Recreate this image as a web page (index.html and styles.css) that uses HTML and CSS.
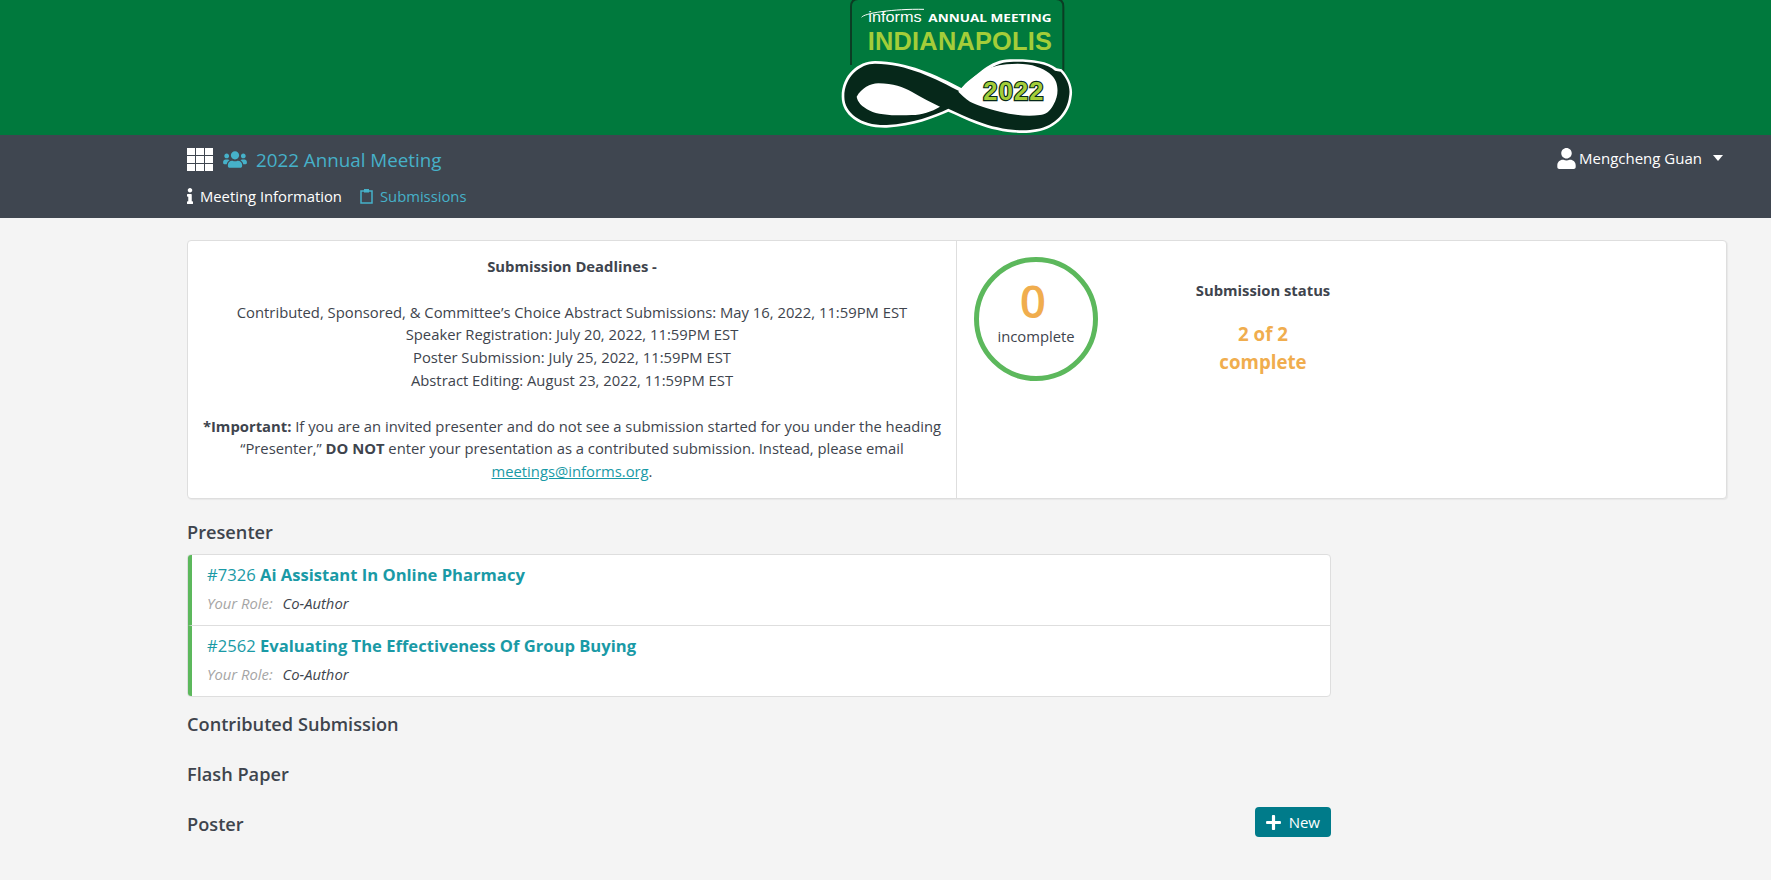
FILE: index.html
```html
<!DOCTYPE html>
<html lang="en">
<head>
    <meta charset="UTF-8">
    <title>2022 Annual Meeting</title>
    <link rel="stylesheet" href="styles.css">
</head>
<body>
    <!-- banner -->
    <header class="banner">
        <svg class="logo" viewBox="0 0 840 405" width="280" height="135">
            <path d="M93 195V20Q93 -3 115 -3H708Q730 -3 730 20V215" fill="none" stroke="#0b3d24" stroke-width="6"/>
            <text class="logo-informs" x="145" y="67" textLength="160" lengthAdjust="spacingAndGlyphs">informs</text>
            <path d="M125 52C130 40 220 26 312 28" fill="none" stroke="#fff" stroke-width="3"/>
            <text class="logo-annual" x="325" y="67" textLength="370" lengthAdjust="spacingAndGlyphs">ANNUAL MEETING</text>
            <text class="logo-city" x="143" y="150" textLength="553" lengthAdjust="spacing">INDIANAPOLIS</text>
            <path fill="#fff" d="M65 290C65 225 115 183 165 183C260 183 350 225 425 265C470 225 510 178 570 178C620 176 680 180 710 205L725 208C750 235 760 265 755 290C750 340 710 385 650 395C600 405 530 395 470 372C440 360 410 345 385 335C340 355 280 378 200 383C120 385 65 345 65 290Z"/>
            <path fill="#06281a" d="M73 290C73 230 120 191 165 191C260 191 345 235 425 277C470 240 515 186 570 186C620 184 680 188 705 212L722 215C745 240 752 265 747 290C742 335 705 378 650 387C600 397 530 387 472 364C440 352 410 337 385 326C340 347 280 370 200 375C125 377 73 340 73 290Z"/>
            <path fill="#fff" d="M110 290C125 265 150 250 175 250C220 250 250 262 275 275C305 292 335 308 360 320C335 335 305 345 275 345C230 348 175 345 150 332C125 320 112 305 110 290Z"/>
            <path fill="#fff" d="M415 275C435 250 450 238 470 225C500 205 530 195 560 193C590 190 625 190 650 200C680 210 700 225 708 245C715 265 715 290 700 315C690 335 675 345 660 345C620 350 580 345 540 335C500 325 470 315 450 305C435 295 425 285 415 275Z"/>
            <text class="logo-year" x="490" y="299" textLength="180" lengthAdjust="spacing">2022</text>
        </svg>
    </header>

    <!-- meeting nav -->
    <nav class="topnav">
        <div class="topnav-left">
            <div class="meeting-row">
                <span class="grid-icon"><i></i><i></i><i></i><i></i><i></i><i></i><i></i><i></i><i></i></span>
                <svg class="users-icon" viewBox="0 0 640 512"><path d="M96 224c35.3 0 64-28.7 64-64s-28.7-64-64-64-64 28.7-64 64 28.7 64 64 64zm448 0c35.3 0 64-28.7 64-64s-28.7-64-64-64-64 28.7-64 64 28.7 64 64 64zm32 32h-64c-17.6 0-33.5 7.1-45.1 18.6 40.3 22.1 68.9 62 75.1 109.4h66c17.7 0 32-14.3 32-32v-32c0-35.3-28.7-64-64-64zm-256 0c61.9 0 112-50.1 112-112S381.9 32 320 32 208 82.1 208 144s50.1 112 112 112zm76.8 32h-8.3c-20.8 10-43.9 16-68.5 16s-47.6-6-68.5-16h-8.3C179.6 288 128 339.6 128 403.2V432c0 26.5 21.5 48 48 48h288c26.5 0 48-21.5 48-48v-28.8c0-63.6-51.6-115.2-115.2-115.2zm-223.7-13.4C161.5 263.1 145.6 256 128 256H64c-35.3 0-64 28.7-64 64v32c0 17.7 14.3 32 32 32h65.9c6.3-47.4 34.9-87.3 75.2-109.4z"/></svg>
                <a class="meeting-title">2022 Annual Meeting</a>
            </div>
            <div class="tabs">
                <a class="tab active">
                    <svg class="info-icon" viewBox="0 0 192 512"><path d="M20 424.229h20V279.771H20c-11.046 0-20-8.954-20-20V212c0-11.046 8.954-20 20-20h112c11.046 0 20 8.954 20 20v212.229h20c11.046 0 20 8.954 20 20V492c0 11.046-8.954 20-20 20H20c-11.046 0-20-8.954-20-20v-47.771c0-11.046 8.954-20 20-20zM96 0C56.235 0 24 32.235 24 72s32.235 72 72 72 72-32.235 72-72S135.764 0 96 0z"/></svg>
                    Meeting Information
                </a>
                <a class="tab">
                    <svg class="clip-icon" viewBox="0 0 13 16"><path d="M4 3H1v12h11V3H9" fill="none" stroke="currentColor" stroke-width="1.5"/><rect x="4" y="1" width="5" height="3.5" fill="currentColor"/></svg>
                    Submissions
                </a>
            </div>
        </div>
        <div class="user-menu">
            <svg class="user-icon" viewBox="0 0 448 512"><path d="M224 256c70.7 0 128-57.3 128-128S294.7 0 224 0 96 57.3 96 128s57.3 128 128 128zm89.6 32h-16.7c-22.2 10.2-46.9 16-72.9 16s-50.6-5.8-72.9-16h-16.7C60.2 288 0 348.2 0 422.4V464c0 26.5 21.5 48 48 48h352c26.5 0 48-21.5 48-48v-41.6c0-74.2-60.2-134.4-134.4-134.4z"/></svg>
            <span>Mengcheng Guan</span>
            <span class="caret"></span>
        </div>
    </nav>

    <main class="content">
        <!-- deadlines + status -->
        <section class="summary-card">
            <div class="deadlines">
                <p><strong>Submission Deadlines -</strong></p>
                <p>
                    Contributed, Sponsored, &amp; Committee’s Choice Abstract Submissions: May 16, 2022, 11:59PM EST<br>
                    Speaker Registration: July 20, 2022, 11:59PM EST<br>
                    Poster Submission: July 25, 2022, 11:59PM EST<br>
                    Abstract Editing: August 23, 2022, 11:59PM EST
                </p>
                <p class="last">
                    <strong>*Important:</strong> If you are an invited presenter and do not see a submission started for you under the heading “Presenter,” <strong>DO NOT</strong> enter your presentation as a contributed submission. Instead, please email <a class="mail-link">meetings@informs.org</a>.
                </p>
            </div>
            <div class="status">
                <div class="ring">
                    <span class="ring-num">0</span>
                    <span class="ring-label">incomplete</span>
                </div>
                <div class="status-text">
                    <div class="status-head">Submission status</div>
                    <div class="status-count">2 of 2<br>complete</div>
                </div>
            </div>
        </section>

        <!-- submission lists -->
        <section class="lists">
            <h2 class="list-title">Presenter</h2>
            <div class="sub-list">
                <div class="sub-item">
                    <a class="sub-name">#7326 <b>Ai Assistant In Online Pharmacy</b></a>
                    <div class="sub-role"><span class="role-label">Your Role:</span> Co-Author</div>
                </div>
                <div class="sub-item">
                    <a class="sub-name">#2562 <b>Evaluating The Effectiveness Of Group Buying</b></a>
                    <div class="sub-role"><span class="role-label">Your Role:</span> Co-Author</div>
                </div>
            </div>
            <h2 class="list-title contributed">Contributed Submission</h2>
            <h2 class="list-title flash">Flash Paper</h2>
            <div class="poster-row">
                <h2 class="list-title">Poster</h2>
                <button class="btn-new">
                    <svg class="plus-icon" viewBox="0 0 448 512"><path d="M416 208H272V64c0-17.67-14.33-32-32-32h-32c-17.67 0-32 14.33-32 32v144H32c-17.67 0-32 14.33-32 32v32c0 17.67 14.33 32 32 32h144v144c0 17.67 14.33 32 32 32h32c17.67 0 32-14.33 32-32V304h144c17.67 0 32-14.33 32-32v-32c0-17.67-14.33-32-32-32z"/></svg>
                    New
                </button>
            </div>
        </section>
    </main>
</body>
</html>
```

FILE: styles.css
```css
body {
    margin: 0;
    background-color: #f4f4f4;
    color: #3e444d;
    font-family: "Open Sans", "Noto Sans", Arial, sans-serif;
    font-size: 14.8px;
}

/* banner */
.banner {
    display: flex;
    justify-content: center;
    height: 135px;
    overflow: hidden;
    background-color: #00793d;
}

.logo {
    display: block;
    flex: none;
    margin-left: 149px;
}

.logo-informs {
    font: 400 44px "Liberation Sans", sans-serif;
    fill: #fff;
}

.logo-annual {
    font: 700 34px "Open Sans", sans-serif;
    fill: #fff;
}

.logo-city {
    font: 700 76px "Liberation Sans", sans-serif;
    fill: #a4cd39;
}

.logo-year {
    font: 700 76px "Liberation Sans", sans-serif;
    fill: #a4cd39;
    stroke: #06281a;
    stroke-width: 7px;
    paint-order: stroke;
}

/* meeting nav */
.topnav {
    display: flex;
    justify-content: space-between;
    height: 83px;
    box-sizing: border-box;
    padding: 11px 48px 0 187px;
    background-color: #3f4650;
}

.meeting-row {
    display: flex;
    align-items: center;
    height: 27px;
}

.grid-icon {
    display: grid;
    grid-template-columns: repeat(3, 8px);
    grid-auto-rows: 7px;
    gap: 1px;
    margin-right: 10px;
}

.grid-icon i {
    background-color: #fff;
}

.users-icon {
    width: 24px;
    height: 19px;
    margin-right: 9px;
    fill: #46b1c9;
}

.meeting-title {
    color: #46b1c9;
    font-size: 18.8px;
}

.tabs {
    display: flex;
    gap: 18px;
    margin-top: 13px;
}

.tab {
    display: flex;
    align-items: center;
    gap: 7px;
    color: #46b1c9;
    font-size: 14.8px;
}

.tab.active {
    color: #fff;
}

.info-icon {
    width: 6px;
    height: 16px;
    fill: #fff;
}

.clip-icon {
    width: 13px;
    height: 16px;
}

.user-menu {
    display: flex;
    align-items: center;
    align-self: flex-start;
    height: 24px;
    color: #fff;
    font-size: 15px;
}

.user-icon {
    width: 19px;
    height: 21px;
    margin-right: 3px;
    fill: #fff;
}

.caret {
    width: 0;
    height: 0;
    margin-left: 11px;
    border-top: 6px solid #fff;
    border-left: 5.5px solid transparent;
    border-right: 5.5px solid transparent;
}

/* page body */
.content {
    padding: 22px 44px 0 187px;
}

.summary-card {
    display: grid;
    grid-template-columns: 769px 1fr;
    height: 259px;
    box-sizing: border-box;
    border: 1px solid #dedede;
    border-radius: 4px;
    background-color: #fff;
    box-shadow: 1px 1px 1px rgba(0, 0, 0, 0.05);
}

.deadlines {
    padding: 14px 12px 0;
    border-right: 1px solid #dedede;
    text-align: center;
    line-height: 22.8px;
}

.deadlines p {
    margin: 0 0 22.8px;
}

.deadlines p.last {
    margin: 0;
}

.deadlines strong {
    font-weight: 700;
}

.mail-link {
    color: #1a9aa6;
    text-decoration: underline;
}

.status {
    display: flex;
    align-items: flex-start;
    padding: 16px 0 0 17px;
}

.ring {
    display: flex;
    flex-direction: column;
    align-items: center;
    width: 124px;
    height: 124px;
    box-sizing: border-box;
    border: 5px solid #5cb85c;
    border-radius: 50%;
}

.ring-num {
    margin: 15px 6px 0 0;
    color: #f0ad4e;
    font-size: 46px;
    font-weight: 600;
    line-height: 46px;
}

.ring-label {
    margin-top: 3px;
    font-size: 14.8px;
}

.status-text {
    width: 166px;
    margin: 23px 0 0 82px;
    text-align: center;
}

.status-head {
    font-weight: 700;
}

.status-count {
    margin-top: 20px;
    color: #f0ad4e;
    font-size: 18.7px;
    font-weight: 700;
    line-height: 28px;
}

/* submission lists */
.lists {
    width: 1144px;
    padding-top: 20px;
}

.list-title {
    margin: 0;
    font-size: 18.2px;
    font-weight: 600;
    line-height: 26px;
}

.sub-list {
    margin-top: 9px;
    border: 1px solid #dedede;
    border-radius: 4px;
    background-color: #fff;
    overflow: hidden;
}

.sub-item {
    height: 70px;
    box-sizing: border-box;
    padding: 8px 15px 0;
    border-left: 4px solid #5cb85c;
}

.sub-item + .sub-item {
    height: 71px;
    border-top: 1px solid #dedede;
}

.sub-name {
    display: block;
    color: #1a9aa6;
    font-size: 16.6px;
    line-height: 24px;
}

.sub-name b {
    font-weight: 700;
}

.sub-role {
    margin-top: 6px;
    font-style: italic;
    line-height: 20px;
}

.role-label {
    margin-right: 6px;
    color: #a5a5a5;
}

.contributed {
    margin-top: 14px;
}

.flash {
    margin-top: 24px;
}

.poster-row {
    display: flex;
    align-items: flex-start;
    justify-content: space-between;
    margin-top: 24px;
}

.btn-new {
    display: flex;
    align-items: center;
    gap: 8px;
    height: 30px;
    margin-top: -4px;
    padding: 0 11px;
    border: 0;
    border-radius: 4px;
    background-color: #007b8a;
    color: #fff;
    font: 15px "Open Sans", sans-serif;
}

.plus-icon {
    width: 15px;
    height: 17px;
    fill: #fff;
}
```
